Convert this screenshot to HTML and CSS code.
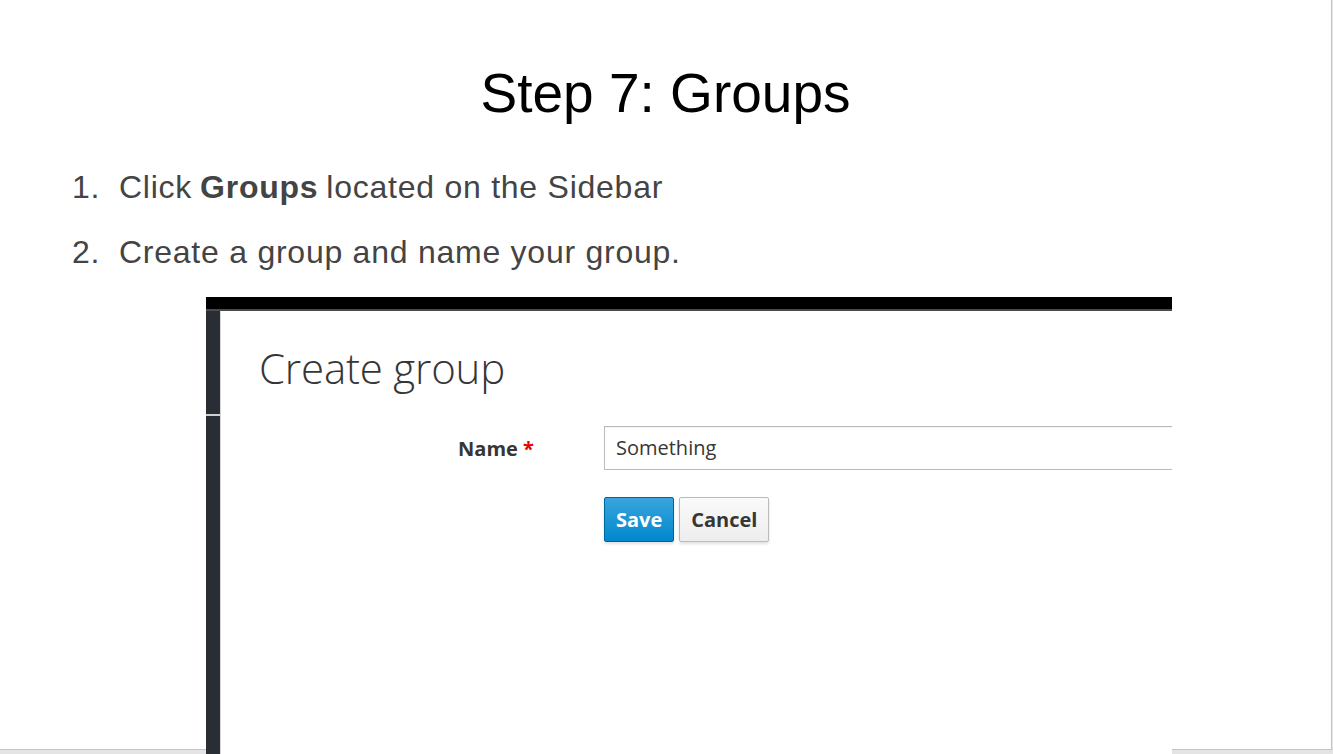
FILE: index.html
```html
<!DOCTYPE html>
<html>
<head>
<meta charset="utf-8">
<link rel="stylesheet" href="styles.css">
</head>
<body>
<div class="slide">
  <h1 class="title">Step 7: Groups</h1>
  <ol class="steps">
    <li>Click <b>Groups</b> located on the Sidebar</li>
    <li>Create a group and name your group.</li>
  </ol>
  <div class="shot">
    <div class="topbar"></div>
    <div class="shot-body">
      <div class="sidebar"><div class="sb-divider"></div></div>
      <div class="content">
        <h2 class="page-title">Create group</h2>
        <div class="form-row">
          <label class="label">Name <span class="req">*</span></label>
          <div class="input">Something</div>
        </div>
        <div class="actions">
          <button class="btn btn-primary">Save</button>
          <button class="btn btn-default">Cancel</button>
        </div>
      </div>
    </div>
  </div>
</div>
</body>
</html>
```
FILE: styles.css
```css
html, body {
  margin: 0;
  padding: 0;
}
body {
  background: #e4e4e4;
  width: 1333px;
  height: 754px;
  overflow: hidden;
}
.slide {
  width: 1331px;
  height: 749px;
  background: #fff;
  border-right: 1px solid #c4c4c4;
  border-bottom: 1px solid #c4c4c4;
  box-sizing: content-box;
  font-family: "Liberation Sans", Arial, sans-serif;
}
.title {
  margin: 0;
  padding-top: 57px;
  font-size: 55px;
  font-weight: normal;
  line-height: 72px;
  color: #000;
  text-align: center;
}
.steps {
  list-style: none;
  counter-reset: step;
  margin: 40px 0 0 0;
  padding: 0 0 0 72px;
  font-size: 32px;
  letter-spacing: 0.75px;
  color: #444;
  line-height: 36px;
}
.steps li {
  counter-increment: step;
  display: flex;
  margin-bottom: 29px;
}
.steps li::before {
  content: counter(step) ".";
  width: 47px;
  flex: none;
}
.steps li b {
  margin: 0 0.25em 0 0.25em;
}
.shot {
  margin: -2px 0 0 206px;
  width: 966px;
  height: 460px;
  overflow: hidden;
  position: relative;
  display: flex;
  flex-direction: column;
  background: #fff;
}
.topbar {
  height: 12px;
  background: #000;
  border-bottom: 2px solid #4a4a4a;
  flex: none;
}
.shot-body {
  flex: 1;
  display: flex;
}
.sidebar {
  width: 14px;
  background: #292e34;
  border-right: 1px solid #d8d8d8;
  flex: none;
  padding-top: 103px;
}
.sb-divider {
  height: 2px;
  background: #d0d0d0;
}
.content {
  flex: 1;
  padding-left: 38px;
  font-family: "Open Sans", sans-serif;
  color: #363636;
}
.page-title {
  margin: 0;
  padding-top: 32px;
  font-size: 42px;
  font-weight: 300;
  line-height: 50px;
  color: #363636;
  letter-spacing: -0.2px;
}
.form-row {
  display: flex;
  align-items: center;
  margin-top: 33px;
}
.label {
  width: 275px;
  text-align: right;
  font-weight: 700;
  font-size: 20px;
  padding-right: 70px;
  box-sizing: content-box;
  flex: none;
}
.req {
  color: #e00;
}
.input {
  flex: none;
  width: 600px;
  height: 42px;
  border: 1px solid #bbb;
  box-sizing: content-box;
  font-size: 20px;
  line-height: 42px;
  padding-left: 11px;
  box-shadow: inset 0 1px 1px rgba(0,0,0,0.05);
}
.actions {
  display: flex;
  gap: 5px;
  margin-left: 345px;
  margin-top: 27px;
}
.btn {
  font-family: "Open Sans", sans-serif;
  font-weight: 700;
  font-size: 20px;
  height: 45px;
  padding: 0 11px;
  border-radius: 2px;
  box-shadow: 0 2px 3px rgba(0,0,0,0.12);
}
.btn-primary {
  color: #fff;
  background: linear-gradient(#39a5dc, #0088ce);
  border: 1px solid #00659c;
}
.btn-default {
  color: #363636;
  background: linear-gradient(#fafafa, #ededed);
  border: 1px solid #bbb;
}
```
